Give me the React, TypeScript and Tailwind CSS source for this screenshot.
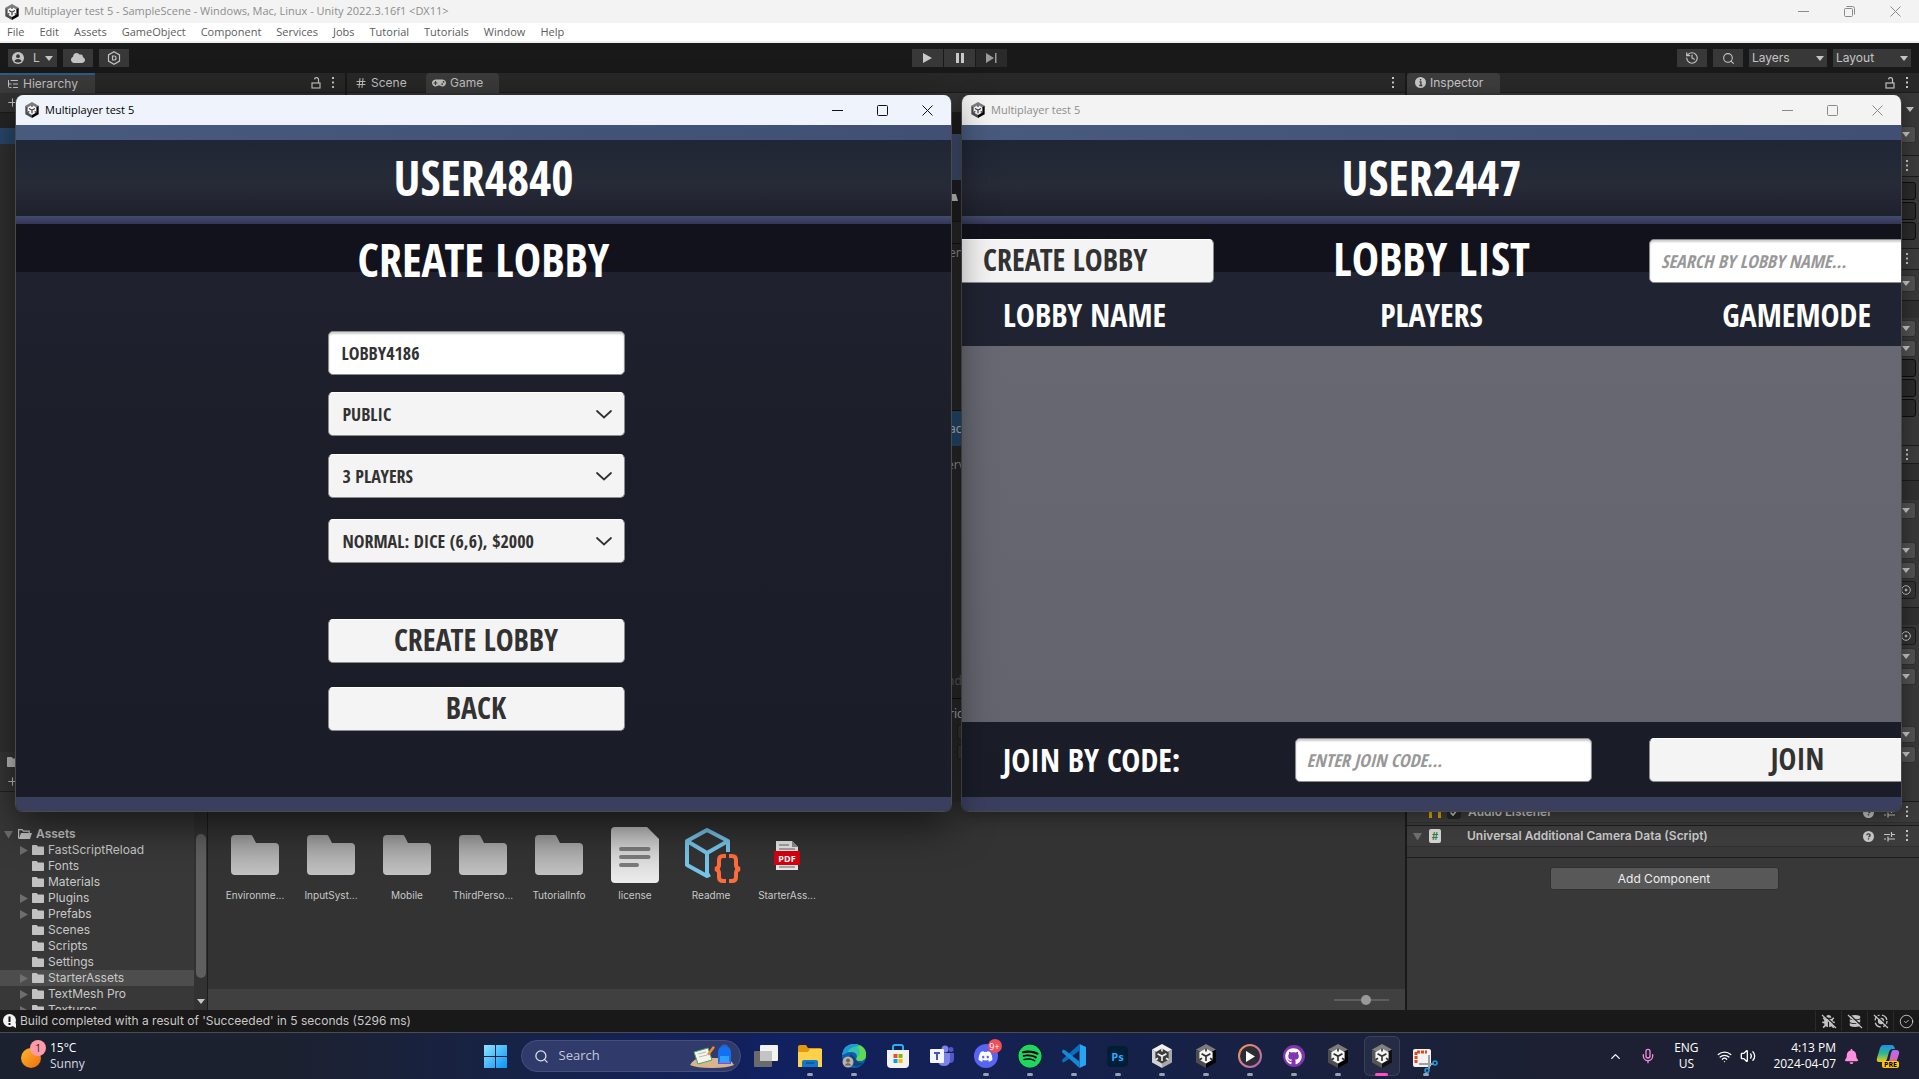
import type { ReactNode } from "react";
import {
  FaDiscord,
  FaSpotify,
  FaGithub,
  FaGamepad,
  FaCloud,
  FaBug,
  FaDatabase,
  FaBell,
} from "react-icons/fa";
import { Mic, Volume2, Wifi, ChevronUp, CircleCheck, Hash, History, Search, Plus, ListTree } from "lucide-react";

const UI = "font-['Inter','Liberation_Sans',sans-serif]";
const WIN = "font-['Open_Sans','Noto_Sans',sans-serif]";
const GAME = "font-['Open_Sans_Condensed','Roboto_Condensed','Roboto',sans-serif] font-bold";

/* ---------- small drawings ---------- */

function UnityCube({ className, light }: { className?: string; light?: boolean }) {
  return (
    <svg viewBox="0 0 24 24" className={className} aria-hidden="true">
      <path d="M12 0 22 5.6 12 11.5 2 5.6Z" fill={light ? "#f2f2f2" : "#7c7c7c"} />
      <path d="M2 5.6 12 11.5V24L2 18.4Z" fill={light ? "#d2d2d2" : "#4d4d4d"} />
      <path d="M22 5.6 12 11.5V24l10-5.6Z" fill={light ? "#a8a8a8" : "#050505"} />
      <path d="M12 4.6 18.6 8.2V15.8L12 19.6 5.4 15.8V8.2Z" fill={light ? "#3c3c3c" : "#f4f4f4"} />
      <path
        d="M12 12.2V17M12 12.2 7.6 9.7M12 12.2l4.4-2.5M12 4.6v3M5.4 15.8 8 14.2M18.6 15.8 16 14.2"
        stroke={light ? "#f0f0f0" : "#2a2a2a"}
        strokeWidth="1.6"
        fill="none"
      />
    </svg>
  );
}

function Kebab({ className = "" }: { className?: string }) {
  return (
    <svg viewBox="0 0 4 12" className={`h-3 w-1 shrink-0 ${className}`} fill="#c4c4c4" aria-hidden="true">
      <rect x="1" y="0" width="2" height="2" />
      <rect x="1" y="4.5" width="2" height="2" />
      <rect x="1" y="9" width="2" height="2" />
    </svg>
  );
}

function Lock() {
  return (
    <svg viewBox="0 0 10 12" className="h-3 w-[10px]" fill="none" stroke="#c4c4c4" strokeWidth="1.2" aria-hidden="true">
      <rect x="1" y="6" width="8" height="5" />
      <path d="M7.5 6V3a2 2 0 0 0-4-.6" />
    </svg>
  );
}

function Caret({ className = "" }: { className?: string }) {
  return (
    <svg viewBox="0 0 8 5" className={`h-[5px] w-2 shrink-0 ${className}`} fill="#c4c4c4" aria-hidden="true">
      <path d="M0 0h8L4 5Z" />
    </svg>
  );
}

function Twist({ open }: { open?: boolean }) {
  return (
    <svg viewBox="0 0 9 9" className="h-[9px] w-[9px] shrink-0" fill="#6e6e6e" aria-hidden="true">
      <path d={open ? "M0 1h9L4.500 8.500Z" : "M1 0v9L9 4.500Z"} />
    </svg>
  );
}

function SmallFolder() {
  return (
    <svg viewBox="0 0 12 10" className="h-[10px] w-3 shrink-0" fill="#c2c2c2" aria-hidden="true">
      <path d="M0 .8Q0 0 .8 0H4.600L6 1.600h5.200q.8 0 .8.8v6.800q0 .8-.8.8H.8Q0 10 0 9.200Z" />
    </svg>
  );
}

function OpenFolder() {
  return (
    <svg viewBox="0 0 14 10" className="h-[10px] w-[14px] shrink-0" aria-hidden="true">
      <path d="M.6 9.400V.6H4l1.400 1.500h5.800V4" fill="none" stroke="#c2c2c2" strokeWidth="1.200" />
      <path d="M3 4h11l-2 6H.8Z" fill="#c2c2c2" />
    </svg>
  );
}

function BigFolder() {
  return (
    <svg viewBox="0 0 48 40" className="h-10 w-12" aria-hidden="true">
      <defs>
        <linearGradient id="folder" x1="0" y1="0" x2="0" y2="1">
          <stop offset="0" stopColor="#9d9d9d" />
          <stop offset="1" stopColor="#c2c2c2" />
        </linearGradient>
      </defs>
      <path
        d="M4 0H19.500Q21 0 21.700 1.400L25 8H44q4 0 4 4V36q0 4-4 4H4q-4 0-4-4V4Q0 0 4 0Z"
        fill="url(#folder)"
      />
    </svg>
  );
}

function LicenseIcon() {
  return (
    <svg viewBox="0 0 48 56" className="h-14 w-12" aria-hidden="true">
      <defs>
        <linearGradient id="paper" x1="0" y1="0" x2="0" y2="1">
          <stop offset="0" stopColor="#c2c2c2" />
          <stop offset="1" stopColor="#ececec" />
        </linearGradient>
      </defs>
      <path d="M4 0H36L48 12V52q0 4-4 4H4q-4 0-4-4V4Q0 0 4 0Z" fill="url(#paper)" />
      <path d="M10 22H37.500M10 30H37.500M10 38H26" stroke="#7a7a7a" strokeWidth="4" strokeLinecap="round" />
    </svg>
  );
}

function ReadmeIcon() {
  return (
    <svg viewBox="0 0 56 56" className="ml-1 h-14 w-14" fill="none" aria-hidden="true">
      <path
        d="M43 25V14L22 3 2 14V38L22 49l3-1.500M2 14 22 26 43 14M22 26V49"
        stroke="#76c3ea"
        strokeWidth="4"
        strokeLinejoin="round"
      />
      <path
        d="M41 29h-3q-4 0-4 4v5q0 3.500-4 4 4 .5 4 4v4q0 4 4 4h3M44 29h3q4 0 4 4v5q0 3.500 4 4-4 .5-4 4v4q0 4-4 4h-3"
        stroke="#ff6c3c"
        strokeWidth="4"
      />
    </svg>
  );
}

function PdfIcon() {
  return (
    <svg viewBox="0 0 26 29" className="h-[29px] w-[26px]" aria-hidden="true">
      <path d="M2 0H18l6 6V29H2Z" fill="#e6e6e6" />
      <path d="M18 0l6 6h-6Z" fill="#8c8c8c" />
      <path d="M5 4H15M5 8H21M5 26H21" stroke="#8e8e8e" strokeWidth="1.500" />
      <rect x="0" y="10" width="26" height="14" fill="#d6000f" />
      <text x="13" y="20.500" textAnchor="middle" fontSize="9" fontWeight="700" fill="#fff" fontFamily="Open Sans, sans-serif">
        PDF
      </text>
    </svg>
  );
}

function CaptionButtons({ color, restore, gap }: { color: string; restore?: boolean; gap: string }) {
  return (
    <div className={`ml-auto flex items-center ${gap}`}>
      <button aria-label="Minimize" className="grid size-3 place-items-center">
        <svg viewBox="0 0 11 11" className="size-[11px]" stroke={color} fill="none">
          <path d="M0 5.500h11" />
        </svg>
      </button>
      <button aria-label="Maximize" className="grid size-3 place-items-center">
        <svg viewBox="0 0 11 11" className="size-[11px]" stroke={color} fill="none">
          {restore ? (
            <path d="M.5 3.500q0-1 1-1h6q1 0 1 1v6q0 1-1 1h-6q-1 0-1-1ZM2.500.5h6q2 0 2 2v6" />
          ) : (
            <rect x=".5" y=".5" width="10" height="10" rx="1" />
          )}
        </svg>
      </button>
      <button aria-label="Close" className="grid size-3 place-items-center">
        <svg viewBox="0 0 11 11" className="size-[11px]" stroke={color} fill="none">
          <path d="M.5.5l10 10M10.500.5l-10 10" />
        </svg>
      </button>
    </div>
  );
}

/* ---------- editor ---------- */

const menus = [
  "File", "Edit", "Assets", "GameObject", "Component", "Services",
  "Jobs", "Tutorial", "Tutorials", "Window", "Help",
];

function EditorTop() {
  const tool = "flex h-[18px] items-center bg-[#383838] text-[#c4c4c4]";
  return (
    <header>
      <div className={`flex h-[23px] items-center bg-[#f3f3f3] pl-1 pr-[18px] text-[11px] text-[#8d8d8d] ${WIN}`}>
        <UnityCube className="mr-1 size-4" />
        Multiplayer test 5 - SampleScene - Windows, Mac, Linux - Unity 2022.3.16f1 &lt;DX11&gt;
        <CaptionButtons color="#8a8a8a" restore gap="gap-[34px]" />
      </div>
      <nav className={`flex h-5 items-center gap-[15px] border-b-2 border-[#f0f0f0] bg-white pl-[7px] text-[11px] text-[#5d5d5d] ${WIN}`}>
        {menus.map((m) => (
          <button key={m}>{m}</button>
        ))}
      </nav>
      <div className={`grid h-[30px] grid-cols-[1fr_auto_1fr] items-center bg-[#191919] px-2 text-[12px] text-[#b4b4b4] ${UI}`}>
        <div className="flex gap-[6px]">
          <button className={`${tool} w-[49px] justify-between px-1`}>
            <svg viewBox="0 0 12 12" className="size-3" aria-hidden="true">
              <circle cx="6" cy="6" r="6" fill="#c4c4c4" />
              <circle cx="6" cy="4.200" r="1.900" fill="#383838" />
              <path d="M2.500 9.500Q2.500 7 6 7t3.500 2.500Q6 11.500 2.500 9.500Z" fill="#383838" />
            </svg>
            <span className="pl-1">L</span>
            <Caret />
          </button>
          <button aria-label="Cloud" className={`${tool} w-[30px] justify-center`}>
            <FaCloud size={14} />
          </button>
          <button aria-label="Fast Script Reload" className={`${tool} w-[30px] justify-center`}>
            <svg viewBox="0 0 14 14" className="size-[14px]" fill="none" stroke="#c4c4c4" strokeWidth="1.200" aria-hidden="true">
              <path d="M7 .8 12.500 3.900V10.100L7 13.200 1.500 10.100V3.900Z" />
              <path d="M5.500 5H7.200Q9 5 9 7T7.200 9H5.500Z" />
            </svg>
          </button>
        </div>
        <div className="flex gap-px">
          <button aria-label="Play" className={`${tool} w-[31px] justify-center`}>
            <svg viewBox="0 0 9 10" className="h-[10px] w-[9px]" fill="#c9c9c9"><path d="M0 0l9 5-9 5Z" /></svg>
          </button>
          <button aria-label="Pause" className={`${tool} w-[31px] justify-center`}>
            <svg viewBox="0 0 8 10" className="h-[10px] w-2" fill="#c9c9c9"><path d="M0 0h3v10H0ZM5 0h3v10H5Z" /></svg>
          </button>
          <button aria-label="Step" className="flex h-[18px] w-[31px] items-center justify-center bg-[#2a2a2a]">
            <svg viewBox="0 0 11 10" className="h-[10px] w-[11px]" fill="#9a9a9a"><path d="M0 0l8 5-8 5ZM9 0h1.500v10H9Z" /></svg>
          </button>
        </div>
        <div className="flex justify-end gap-[6px]">
          <button aria-label="Undo history" className={`${tool} w-[30px] justify-center`}><History size={14} /></button>
          <button aria-label="Search" className={`${tool} w-[30px] justify-center`}><Search size={13} /></button>
          <button className={`${tool} w-[78px] justify-between px-[3px]`}>Layers<Caret /></button>
          <button className={`${tool} w-[78px] justify-between px-[3px]`}>Layout<Caret /></button>
        </div>
      </div>
    </header>
  );
}

function TabBar({ children, lock }: { children: ReactNode; lock?: boolean }) {
  return (
    <div className="flex h-5 shrink-0 items-center border-b border-[#1c1c1c] bg-[#282828] pr-[10px] text-[12px] text-[#c4c4c4]">
      {children}
      <div className="ml-auto flex items-center gap-[10px]">
        {lock && <Lock />}
        <Kebab />
      </div>
    </div>
  );
}

function Hierarchy() {
  return (
    <section className="flex w-[345px] flex-col bg-[#323232]">
      <TabBar lock>
        <button className="flex h-5 w-[95px] items-center gap-1 border-t-2 border-[#2c5d87] bg-[#3c3c3c] pl-[7px]">
          <ListTree size={12} /> Hierarchy
        </button>
      </TabBar>
      <button aria-label="Add" className="flex h-[19px] items-center pl-[6px] text-[#c4c4c4]">
        <Plus size={13} />
      </button>
      <div className="h-4 border-t border-[#1c1c1c] bg-[#262626]" />
      <div className="h-4 bg-[#2c4a70]" />
    </section>
  );
}

function GamePanel() {
  return (
    <section className="flex flex-1 flex-col bg-[#363636]">
      <TabBar>
        <button className="flex h-5 w-[79px] items-center gap-1 pl-2">
          <Hash size={12} /> Scene
        </button>
        <button className="flex h-5 w-[73px] items-center gap-1 rounded-t-sm bg-[#3c3c3c] pl-[6px]">
          <FaGamepad size={14} /> Game
        </button>
      </TabBar>
    </section>
  );
}

const tree: { name: string; arrow?: boolean; selected?: boolean }[] = [
  { name: "FastScriptReload", arrow: true },
  { name: "Fonts" },
  { name: "Materials" },
  { name: "Plugins", arrow: true },
  { name: "Prefabs", arrow: true },
  { name: "Scenes" },
  { name: "Scripts" },
  { name: "Settings" },
  { name: "StarterAssets", arrow: true, selected: true },
  { name: "TextMesh Pro", arrow: true },
  { name: "Textures", arrow: true },
];

const assets: { name: string; icon: ReactNode }[] = [
  { name: "Environme...", icon: <BigFolder /> },
  { name: "InputSyst...", icon: <BigFolder /> },
  { name: "Mobile", icon: <BigFolder /> },
  { name: "ThirdPerso...", icon: <BigFolder /> },
  { name: "TutorialInfo", icon: <BigFolder /> },
  { name: "license", icon: <LicenseIcon /> },
  { name: "Readme", icon: <ReadmeIcon /> },
  { name: "StarterAss...", icon: <PdfIcon /> },
];

function Project() {
  return (
    <section className="flex h-[258px] shrink-0 flex-col bg-[#383838] text-[12px] text-[#c8c8c8]">
      <div className="flex h-5 items-center pl-[7px]"><SmallFolder /></div>
      <div className="flex h-5 items-center border-b border-[#232323] pl-[6px]"><Plus size={13} /></div>
      <div className="flex min-h-0 flex-1">
        <div className="w-[194px] overflow-hidden pt-[34px]">
          <div className="flex h-4 items-center gap-1 pl-1 font-semibold leading-4">
            <Twist open />
            <span className="flex items-center gap-1 pl-px"><OpenFolder /> Assets</span>
          </div>
          {tree.map((t) => (
            <div key={t.name} className={`flex h-4 items-center gap-1 pl-[19px] leading-4 ${t.selected ? "bg-[#4d4d4d]" : ""}`}>
              <span className="flex w-[9px]">{t.arrow && <Twist />}</span>
              <SmallFolder />
              <span>{t.name}</span>
            </div>
          ))}
        </div>
        <div className="flex w-[14px] flex-col items-center border-r border-[#1c1c1c] bg-[#323232] pt-[42px]">
          <div className="h-36 w-[10px] rounded-full bg-[#5f5f5f]" />
          <Caret className="mt-auto mb-[6px]" />
        </div>
        <div className="flex flex-1 flex-col bg-[#333333]">
          <div className="flex flex-1 pl-[9px] pt-[34px]">
            {assets.map((a) => (
              <figure key={a.name} className="flex w-[76px] flex-col items-center">
                <div className="grid h-[58px] place-items-center">{a.icon}</div>
                <figcaption className="mt-[3px] text-[10px] leading-4">{a.name}</figcaption>
              </figure>
            ))}
          </div>
          <div className="flex h-[21px] items-center justify-end bg-[#404040] pr-4">
            <input
              type="range"
              aria-label="Icon size"
              defaultValue={60}
              className="h-[2px] w-[55px] appearance-none bg-[#5e5e5e] [&::-webkit-slider-thumb]:size-[10px] [&::-webkit-slider-thumb]:appearance-none [&::-webkit-slider-thumb]:rounded-full [&::-webkit-slider-thumb]:bg-[#999999]"
            />
          </div>
        </div>
      </div>
    </section>
  );
}

/* ---------- inspector ---------- */

function Drop({ className = "" }: { className?: string }) {
  return (
    <div className={`mr-[3px] flex h-[17px] items-center justify-end rounded-[3px] border border-[#303030] bg-[#515151] pr-[5px] ${className}`}>
      <Caret />
    </div>
  );
}
function Field({ className = "" }: { className?: string }) {
  return <div className={`mr-[3px] h-[18px] rounded-[3px] border border-[#0d0d0d] bg-[#2a2a2a] ${className}`} />;
}
function ObjectField({ className = "" }: { className?: string }) {
  return (
    <div className={`mr-[3px] flex h-[18px] items-center justify-end rounded-[3px] border border-[#1c1c1c] bg-[#323232] pr-1 ${className}`}>
      <svg viewBox="0 0 10 10" className="size-[10px]" fill="none" stroke="#c4c4c4">
        <circle cx="5" cy="5" r="4.300" />
        <circle cx="5" cy="5" r="1" fill="#c4c4c4" />
      </svg>
    </div>
  );
}
function KebabRow({ className = "" }: { className?: string }) {
  return (
    <div className={`flex items-center justify-end border-y border-[#1c1c1c] bg-[#3c3c3c] pr-[10px] ${className}`}>
      <Kebab />
    </div>
  );
}
function RowTools() {
  return (
    <div className="ml-auto flex items-center gap-[10px]">
      <svg viewBox="0 0 11 11" className="size-[11px]" aria-hidden="true">
        <circle cx="5.500" cy="5.500" r="5.500" fill="#c4c4c4" />
        <path d="M3.800 4.300Q3.900 2.800 5.500 2.800t1.700 1.400q0 .8-1.700 1.900M5.500 7.300v1.300" stroke="#383838" strokeWidth="1.300" fill="none" />
      </svg>
      <svg viewBox="0 0 11 11" className="size-[11px]" stroke="#c4c4c4" strokeWidth="1.200" aria-hidden="true">
        <path d="M0 3.500h6M8 3.500h3M7.500 1v5M0 8h2M4.500 8H11M4 5.500v5" />
      </svg>
      <Kebab />
    </div>
  );
}

function Inspector() {
  return (
    <aside className="flex w-[514px] shrink-0 flex-col border-l-2 border-[#191919] bg-[#383838] text-[12px] text-[#c4c4c4]">
      <TabBar lock>
        <button className="flex h-5 w-[93px] items-center gap-1 rounded-t-sm bg-[#3c3c3c] pl-2">
          <svg viewBox="0 0 11 11" className="size-[11px]" aria-hidden="true">
            <circle cx="5.500" cy="5.500" r="5.500" fill="#c4c4c4" />
            <path d="M4.500 4.800h1.400V8.500M4.300 8.500h3M5.500 2v1.500" stroke="#3c3c3c" strokeWidth="1.300" fill="none" />
          </svg>
          Inspector
        </button>
      </TabBar>
      <div className="flex h-[33px] items-center justify-end pr-[5px]"><Caret /></div>
      <Drop />
      <KebabRow className="mt-3 h-[22px]" />
      <Field className="mt-[5px]" />
      <Field className="mt-0.5" />
      <Field className="mt-0.5" />
      <KebabRow className="mt-2 h-[22px]" />
      <Drop className="mt-[5px]" />
      <div className="mt-2 h-[18px] border-t border-[#1c1c1c] bg-[#303030]" />
      <Drop className="mt-0.5" />
      <Drop className="mt-[3px]" />
      <Field className="mt-0.5" />
      <Field className="mt-0.5" />
      <Field className="mt-0.5" />
      <KebabRow className="mt-7 h-[19px]" />
      <div className="h-9 bg-[#303030]"><div className="h-[17px] border-b border-[#1c1c1c]" /></div>
      <Drop className="mt-0.5" />
      <Drop className="mt-[23px]" />
      <Drop className="mt-[3px]" />
      <ObjectField className="mt-0.5" />
      <div className="mt-2 h-[18px] border-t border-[#1c1c1c] bg-[#303030]" />
      <ObjectField className="mt-0.5" />
      <Drop className="mt-[3px]" />
      <Drop className="mt-[3px]" />
      <Drop className="mt-[41px]" />
      <Drop className="mt-[3px]" />
      <div className="mt-auto flex h-[21px] items-center border-t border-[#1c1c1c] bg-[#3c3c3c] pl-[22px] pr-[10px] font-semibold">
        <span className="h-3 w-3 border-x-[3px] border-[#d9a300]" />
        <label className="flex items-center gap-[7px] pl-[6px]">
          <span className="grid">
            <input type="checkbox" defaultChecked className="col-start-1 row-start-1 size-[14px] appearance-none rounded-[3px] bg-[#262626]" />
            <svg viewBox="0 0 14 14" className="col-start-1 row-start-1 size-[14px]" fill="none" stroke="#c4c4c4" strokeWidth="1.600" aria-hidden="true">
              <path d="M3.500 7.500 6 10l5-6" />
            </svg>
          </span>
          Audio Listener
        </label>
        <RowTools />
      </div>
      <div className="h-1 border-b border-t border-[#1c1c1c] border-t-[#303030]" />
      <div className="flex h-[21px] items-center border-b border-[#303030] bg-[#3c3c3c] pl-[6px] pr-[10px] font-semibold">
        <Twist open />
        <span className="ml-[7px] grid h-[14px] w-3 place-items-center rounded-[2px] bg-[#d2d2d2] text-[10px] text-[#2c7a3a]">#</span>
        <span className="ml-[26px]">Universal Additional Camera Data (Script)</span>
        <RowTools />
      </div>
      <div className="h-[11px] border-b border-[#1c1c1c]" />
      <div className="flex h-[152px] justify-center pl-0.5 pt-[9px]">
        <button className="h-[23px] w-[229px] rounded-[3px] border border-[#303030] bg-[#585858] text-[#eeeeee]">Add Component</button>
      </div>
    </aside>
  );
}

function StatusBar() {
  const cell = "relative grid h-5 w-[26px] place-items-center border-l border-[#2a2a2a] text-[#c4c4c4]";
  const slash = (
    <svg viewBox="0 0 16 16" className="absolute size-4" strokeWidth="1.200">
      <path d="M2 1l14 13" stroke="#191919" />
      <path d="M1 2l14 13" stroke="#c4c4c4" />
    </svg>
  );
  return (
    <footer className={`flex h-[22px] shrink-0 items-center bg-[#191919] pl-[3px] text-[12px] text-[#c8c8c8] ${UI}`}>
      <svg viewBox="0 0 13 14" className="mr-1 h-[14px] w-[13px]" aria-hidden="true">
        <circle cx="6.500" cy="6.500" r="6.500" fill="#f2f2f2" />
        <path d="M8 11l5-2v5Z" fill="#f2f2f2" />
        <path d="M6.500 2.500V8M6.500 9v2" stroke="#111" strokeWidth="2" />
      </svg>
      Build completed with a result of 'Succeeded' in 5 seconds (5296 ms)
      <div className="ml-auto flex">
        <span className={cell}><FaBug size={13} />{slash}</span>
        <span className={cell}><FaDatabase size={12} />{slash}</span>
        <span className={cell}>
          <svg viewBox="0 0 14 14" className="size-[14px]" fill="none" stroke="#c4c4c4" strokeWidth="1.300">
            <circle cx="7" cy="7" r="6" strokeDasharray="7 2.500" />
            <circle cx="7" cy="7" r="2.500" fill="#c4c4c4" />
          </svg>
          {slash}
        </span>
        <span className={cell}><CircleCheck size={15} strokeWidth={1.500} /></span>
      </div>
    </footer>
  );
}

/* ---------- game windows ---------- */

const control = "h-11 w-[297px] shrink-0 rounded-[5px] border border-[#8b8b8b] border-t-white bg-[#f4f4f4] text-[#323232]";
const action = `${control} pb-[3px] text-[30px] leading-10 uppercase`;
const textBox = "h-11 w-[297px] shrink-0 rounded-[5px] border border-[#8b8b8b] bg-white text-[18px] shadow-[inset_0_2px_2px_#cfcfcf]";

function GameWindow({ user, active, className, children }: { user: string; active?: boolean; className: string; children: ReactNode }) {
  return (
    <section
      className={`absolute top-[95px] flex h-[717px] flex-col overflow-hidden rounded-lg border border-t-0 border-[#4a4a4e] ${active ? "shadow-[0_12px_40px_rgba(0,0,0,0.6)]" : "shadow-[0_4px_18px_rgba(0,0,0,0.4)]"} ${className}`}
    >
      <div
        className={`flex h-[30px] shrink-0 items-center pl-2 pr-[18px] text-[11px] ${WIN} ${active ? "bg-[#eff3fb] text-black" : "bg-[#f3f3f3] text-[#8d8d8d]"}`}
      >
        <UnityCube className="mr-[5px] size-4" />
        Multiplayer test 5
        <CaptionButtons color={active ? "#111111" : "#8a8a8a"} gap="gap-[33px]" />
      </div>
      <div className={`flex min-h-0 flex-1 flex-col bg-linear-to-b from-[#222632] via-[#1c1e2a] via-45% to-[#1a1c28] uppercase text-white ${GAME}`}>
        <div className="h-[15px] shrink-0 bg-linear-to-r from-[#485a7d] to-[#414f75]" />
        <div className="flex h-[76px] shrink-0 items-center justify-center bg-linear-to-b from-[#1f2635] via-[#272b37] via-60% to-[#1e202c] text-[48px]">
          <h1>{user}</h1>
        </div>
        <div className="h-2 shrink-0 bg-linear-to-b from-[#434c6c] to-[#353558]" />
        {children}
        <div className="h-[14px] shrink-0 bg-[#3b3f5e]" />
      </div>
    </section>
  );
}

function LobbySelect({ label, value, className = "" }: { label: string; value: string; className?: string }) {
  return (
    <div className={`relative ${className}`}>
      <select aria-label={label} defaultValue={value} className={`${control} appearance-none pl-[14px] text-[18px] uppercase`}>
        <option>{value}</option>
      </select>
      <svg viewBox="0 0 16 9" className="pointer-events-none absolute right-[13px] top-[18px] h-[9px] w-4" fill="none" stroke="#323232" strokeWidth="1.800" aria-hidden="true">
        <path d="M1 1l7 6.500L15 1" strokeLinecap="round" />
      </svg>
    </div>
  );
}

function CreateLobby() {
  return (
    <>
      <div className="h-12 shrink-0 bg-[#12121c]">
        <h2 className="pt-[3px] text-center text-[46px] leading-[64px]">Create Lobby</h2>
      </div>
      <form className="flex flex-1 flex-col items-center pr-[15px] pt-[59px]">
        <input aria-label="Lobby name" defaultValue="LOBBY4186" className={`${textBox} px-[13px] text-[#323232]`} />
        <LobbySelect label="Visibility" value="Public" className="mt-[17px]" />
        <LobbySelect label="Players" value="3 Players" className="mt-[18px]" />
        <LobbySelect label="Game mode" value="Normal: Dice (6,6), $2000" className="mt-[21px]" />
        <button type="button" className={`${action} mt-14`}>Create Lobby</button>
        <button type="button" className={`${action} mt-6`}>Back</button>
      </form>
    </>
  );
}

function LobbyList() {
  return (
    <>
      <div className="h-[122px] shrink-0 bg-linear-to-b from-[#12121c] from-[48px] to-[#202432] to-[48px]">
        <div className="grid h-[73px] grid-cols-[1fr_auto_1fr] items-center">
          <button className={`${action} -ml-[45px] pl-[65px] text-left`}>Create Lobby</button>
          <h2 className="pb-[6px] text-[46px] leading-[64px]">Lobby List</h2>
          <div className="flex justify-end overflow-hidden">
            <input
              aria-label="Search by lobby name"
              placeholder="SEARCH BY LOBBY NAME..."
              className={`${textBox} -mr-[45px] px-[11px] italic placeholder:text-[#989898]`}
            />
          </div>
        </div>
        <div className="grid grid-cols-3 items-center text-[32px] leading-9">
          <span className="pl-[41px]">Lobby Name</span>
          <span className="text-center">Players</span>
          <span className="pr-[30px] text-right">Gamemode</span>
        </div>
      </div>
      <div className="flex-1 bg-linear-to-b from-[#686873] to-[#64646e]" />
      <form className="flex h-[75px] shrink-0 items-center justify-between pt-px">
        <label htmlFor="code" className="w-[275px] pl-[41px] text-[32px]">Join by code:</label>
        <input id="code" placeholder="ENTER JOIN CODE..." className={`${textBox} px-[11px] italic placeholder:text-[#989898]`} />
        <div className="flex w-[252px] overflow-hidden">
          <button type="button" className={action}>Join</button>
        </div>
      </form>
    </>
  );
}

/* The build settings window shows only as a strip between the two game windows. */
function BuildSettings() {
  return (
    <div className="absolute left-[951px] top-[112px] flex h-[690px] w-3 flex-col overflow-hidden bg-[#2e2e2e] text-[12px] leading-4 text-[#a8a8a8]">
      <div className="h-[22px] shrink-0 bg-[#202020]" />
      <div className="h-[46px] shrink-0 bg-[#4a5a80]" />
      <div className="flex h-[21px] shrink-0 items-end bg-[#23232c] text-white">
        <svg viewBox="0 0 11 7" className="h-[7px] w-[11px]" fill="#e4e4e4" aria-hidden="true">
          <path d="M0 0h5l2 7H0ZM10 0h1v7h-1Z" />
        </svg>
      </div>
      <div className="h-[21px] shrink-0 border-b border-[#1c1c1c] bg-[#242424]" />
      <div className="h-[22px] shrink-0 border-b border-[#151515]" />
      <span className="-ml-0.5 mt-px">en</span>
      <div className="mt-[149px] flex h-9 shrink-0 items-center border-t border-[#151515] bg-[#2a567e] text-[#d8d8d8]"><span className="-ml-0.5">ac</span></div>
      <span className="-ml-1 mt-[11px]">erv</span>
      <span className="-ml-1 mt-[200px] text-[#666666]">nd</span>
      <div className="mt-[9px] border-t border-[#101010] pt-[7px] text-[#c4c4c4]"><span className="-ml-0.5">ric</span></div>
      <div className="ml-[6px] mt-[2px] h-4 shrink-0 rounded-sm border border-[#202020] bg-[#3a3a3a]" />
      <div className="ml-[6px] mt-1 h-4 shrink-0 rounded-sm border border-[#202020] bg-[#3a3a3a]" />
    </div>
  );
}

/* ---------- taskbar ---------- */

function TaskItem({ children, running, active, label }: { children: ReactNode; running?: boolean; active?: boolean; label: string }) {
  return (
    <button aria-label={label} className="relative flex h-10 w-11 flex-col items-center justify-center">
      {active && <span className="absolute inset-y-0 left-1 w-9 rounded-md border border-white/10 bg-white/5" />}
      {children}
      {running && <span className="absolute bottom-0 h-[3px] w-[6px] rounded-full bg-[#9aa0b4]" />}
      {active && <span className="absolute bottom-0 h-[3px] w-[13px] rounded-full bg-[#ff4fc3]" />}
    </button>
  );
}

function Taskbar() {
  return (
    <footer
      className={`grid h-[47px] shrink-0 grid-cols-[1fr_auto_1fr] items-center border-t border-[#4b4c52] bg-linear-to-r from-[#1c2130] from-15% via-[#112060] via-40% to-[#1c2032] to-80% text-[12px] text-white ${WIN}`}
    >
      <div className="flex items-center gap-[9px] pl-[21px]">
        <span className="relative mt-1 size-5 rounded-full bg-linear-to-br from-[#f7b72c] to-[#f06a10]">
          <span className="absolute -top-2 left-[9px] grid size-4 place-items-center rounded-full bg-[#ff9aa8] text-[10px] leading-none text-[#222]">1</span>
        </span>
        <p className="leading-4">15°C<br /><span className="text-[#d8dae0]">Sunny</span></p>
      </div>
      <div className="flex items-center pl-0.5">
        <TaskItem label="Start">
          <svg viewBox="0 0 23 23" className="size-[23px]">
            <defs>
              <linearGradient id="win" x1="0" y1="0" x2="1" y2="1">
                <stop offset="0" stopColor="#8ce5ff" />
                <stop offset="1" stopColor="#0a93f5" />
              </linearGradient>
            </defs>
            <path d="M0 0h11v11H0ZM12 0h11v11H12ZM0 12h11v11H0ZM12 12h11v11H12Z" fill="url(#win)" />
          </svg>
        </TaskItem>
        <label className="mx-[3px] flex h-8 w-[220px] items-center gap-[10px] rounded-full border border-[#46507c] bg-[#303b6c] pl-3 pr-[6px]">
          <Search size={15} color="#dfe2ee" />
          <input aria-label="Search" placeholder="Search" className="w-0 flex-1 text-[13px] placeholder:text-[#c4c9da]" />
          <svg viewBox="0 0 44 24" className="h-6 w-11" aria-hidden="true">
            <path d="M0 21q4-7 12-7h20q9 1 12 7-6 3-22 3T0 21Z" fill="#d9b58c" />
            <path d="M4 8l14-4 4 12-14 4Z" fill="#f6f4ea" stroke="#4aa36a" />
            <path d="M8 10l8-2M9 13l8-2" stroke="#b8b8b8" />
            <path d="M17 10l6-8 2 1.500-6 8Z" fill="#f28a2e" />
            <path d="M28 20V9q0-7 6.500-7T41 9V20Z" fill="#1470f0" />
            <path d="M31 3q3.500-4 7 0" fill="none" stroke="#3b5bc0" strokeWidth="1.500" />
            <path d="M30 12h9v6h-9Z" fill="#29a3ff" />
            <path d="M29 18.500h11" stroke="#b05cf0" strokeWidth="1.500" />
          </svg>
        </label>
        <TaskItem label="Task view">
          <svg viewBox="0 0 24 22" className="h-[22px] w-6">
            <rect x="6" width="18" height="16" rx="1" fill="#f3f3f3" />
            <rect y="6" width="18" height="16" rx="1" fill="#6b6b6b" />
            <rect x="6" y="6" width="12" height="10" fill="#c4c4c4" />
          </svg>
        </TaskItem>
        <TaskItem label="File Explorer" running>
          <svg viewBox="0 0 24 22" className="h-[22px] w-6">
            <path d="M0 2Q0 0 2 0h6l2 3h12q2 0 2 2v6H0Z" fill="#e09a10" />
            <path d="M0 7l10 0 2-3h12v18H0Z" fill="#ffd04a" />
            <path d="M4 22v-5q0-2 2-2h12q2 0 2 2v5Z" fill="#0f78c8" />
            <path d="M8 18h8" stroke="#0a4f92" strokeWidth="1.500" />
          </svg>
        </TaskItem>
        <TaskItem label="Edge" running>
          <svg viewBox="0 0 24 24" className="size-6">
            <circle cx="12" cy="12" r="12" fill="#0c5fa8" />
            <path d="M0 11Q2 0 12 0q12 1 12 11 0 6-7 6-4-1-2-4 0-5-6-5-7 0-9 3Z" fill="#35c1b1" />
            <path d="M12 0q12 1 12 11 0 6-7 6-4-1-2-4Q22 8 12 0Z" fill="#5fd94f" />
            <path d="M0 11Q2 0 12 0q4 0 6 2-10 0-13 7Z" fill="#1c9ad8" />
            <path d="M9 10q-5 8 4 12 5 1 9-3-8 1-9-5Z" fill="#123f7d" />
            <circle cx="6" cy="18" r="5.500" fill="#b9b2a8" />
            <circle cx="6" cy="16.500" r="2" fill="#6b655e" />
            <path d="M2.500 21.500q3.500-5 7 0" fill="#6b655e" />
          </svg>
        </TaskItem>
        <TaskItem label="Microsoft Store">
          <svg viewBox="0 0 24 24" className="size-6">
            <path d="M7 7V3q0-2 2-2h6q2 0 2 2v4" fill="none" stroke="#29b0ee" strokeWidth="2" />
            <path d="M1 6h22v14q0 4-4 4H5q-4 0-4-4Z" fill="#f2f2f2" />
            <path d="M7.500 10h4v4h-4Z" fill="#f04e26" />
            <path d="M12.500 10h4v4h-4Z" fill="#7fba00" />
            <path d="M7.500 15h4v4h-4Z" fill="#00a3ee" />
            <path d="M12.500 15h4v4h-4Z" fill="#ffb902" />
          </svg>
        </TaskItem>
        <TaskItem label="Teams">
          <svg viewBox="0 0 24 22" className="h-[22px] w-6">
            <circle cx="15" cy="4" r="3.500" fill="#7b83eb" />
            <circle cx="21" cy="4.500" r="2.500" fill="#5059c9" />
            <path d="M17 8h7v6q0 4-4 4h-3Z" fill="#5059c9" />
            <path d="M8 8h12v7q0 6-6 6t-6-6Z" fill="#7b83eb" />
            <rect y="4" width="14" height="14" rx="1" fill="#f5f5ff" />
            <path d="M4 8h6M7 8v7" stroke="#4b53bc" strokeWidth="2" />
          </svg>
        </TaskItem>
        <TaskItem label="Discord" running>
          <span className="grid size-6 place-items-center rounded-full bg-[#5865f2]"><FaDiscord size={15} /></span>
          <span className="absolute right-[6px] top-[3px] grid h-[14px] w-[14px] place-items-center rounded-full bg-[#ee4e55] text-[9px] leading-none">9+</span>
        </TaskItem>
        <TaskItem label="Spotify" running>
          <span className="rounded-full bg-black"><FaSpotify size={24} color="#1ed760" /></span>
        </TaskItem>
        <TaskItem label="Visual Studio Code" running>
          <svg viewBox="0 0 24 24" className="size-6">
            <path d="M17.500 0 24 3v18l-6.500 3Z" fill="#2aa4f0" />
            <path d="M17.500 0v6.500L3.500 17.600 1 18.500 0 17l.3-1.500Z" fill="#0a6ebd" />
            <path d="M17.500 24v-6.500L3.500 6.400 1 5.500 0 7l.3 1.500Z" fill="#1688d4" />
          </svg>
        </TaskItem>
        <TaskItem label="Photoshop" running>
          <span className="grid h-[21px] w-[21px] place-items-center rounded bg-[#001e36] text-[11px] font-bold leading-none text-[#31a8ff]">Ps</span>
        </TaskItem>
        <TaskItem label="Unity Hub" running><UnityCube light className="size-6" /></TaskItem>
        <TaskItem label="Unity Editor" running><UnityCube className="size-6" /></TaskItem>
        <TaskItem label="Media Player" running>
          <span className="grid size-6 place-items-center rounded-full bg-linear-to-br from-[#f59a3c] to-[#b05cc0]">
            <span className="grid size-5 place-items-center rounded-full bg-[#2c2c34]">
              <svg viewBox="0 0 9 11" className="ml-[2px] h-[11px] w-[9px]" fill="#fff"><path d="M0 0l9 5.500L0 11Z" /></svg>
            </span>
          </span>
        </TaskItem>
        <TaskItem label="GitHub Desktop" running>
          <span className="grid size-[22px] place-items-center rounded-full bg-[#8534b0]"><FaGithub size={17} /></span>
        </TaskItem>
        <TaskItem label="Multiplayer test 5" running><UnityCube className="size-6" /></TaskItem>
        <TaskItem label="Multiplayer test 5 (active)" active><UnityCube className="size-6" /></TaskItem>
        <TaskItem label="Snipping Tool" running>
          <svg viewBox="0 0 25 24" className="mt-[9px] h-6 w-[25px]">
            <rect width="18" height="18" rx="2" fill="#f3f3f3" />
            <path d="M3 14V3h11" fill="none" stroke="#e0481c" strokeWidth="3" strokeDasharray="3 1" />
            <path d="M16 6v14M6 15h15" stroke="#9aa2a8" strokeWidth="2" />
            <circle cx="22" cy="14" r="2" fill="none" stroke="#1e9be0" strokeWidth="1.600" />
            <circle cx="14" cy="21.500" r="2" fill="none" stroke="#1e9be0" strokeWidth="1.600" />
          </svg>
        </TaskItem>
      </div>
      <div className="flex items-center justify-end pr-[19px]">
        <ChevronUp size={15} />
        <Mic size={16} color="#f08be0" className="ml-[17px]" />
        <p className="ml-[10px] w-10 text-center leading-4">ENG<br />US</p>
        <Wifi size={15} className="ml-[11px]" />
        <Volume2 size={16} className="ml-2" />
        <p className="ml-[17px] text-right leading-4">4:13 PM<br />2024-04-07</p>
        <FaBell size={15} color="#ff8fe0" className="ml-2" />
        <span className="relative ml-[17px] block h-6 w-6">
          <svg viewBox="0 0 24 24" className="size-6" aria-hidden="true">
            <defs>
              <linearGradient id="cpA" x1="0" y1="0" x2="0" y2="1">
                <stop offset="0" stopColor="#1f8df0" />
                <stop offset=".5" stopColor="#2fb98c" />
                <stop offset="1" stopColor="#f3c81c" />
              </linearGradient>
              <linearGradient id="cpB" x1="0" y1="0" x2="0" y2="1">
                <stop offset="0" stopColor="#b06cf0" />
                <stop offset="1" stopColor="#f0609c" />
              </linearGradient>
            </defs>
            <path d="M7 1h9q2 0 3 4h-3q-2 0-3 3l-2 7q-1 3-4 3H3q-3 0-2-4L4 4q1-3 3-3Z" fill="url(#cpA)" />
            <path d="M17 6h3q4 0 3 4l-3 9q-1 3-4 3H9q3 0 4-4l2-9q1-3 2-3Z" fill="url(#cpB)" />
          </svg>
          <span className="absolute bottom-0 left-[6px] rounded-[2px] bg-[#ffc800] px-[2px] text-[7px] font-bold leading-[7px] text-black">PRE</span>
        </span>
      </div>
    </footer>
  );
}

export default function App() {
  return (
    <div className="relative flex h-screen w-full flex-col overflow-hidden bg-[#191919]">
      <EditorTop />
      <main className={`flex min-h-0 flex-1 ${UI}`}>
        <div className="flex min-w-0 flex-1 flex-col">
          <div className="flex min-h-0 flex-1 gap-0.5">
            <Hierarchy />
            <GamePanel />
          </div>
          <Project />
        </div>
        <Inspector />
      </main>
      <StatusBar />
      <Taskbar />
      <BuildSettings />
      <GameWindow user="User2447" className="left-[961px] w-[941px]">
        <LobbyList />
      </GameWindow>
      <GameWindow user="User4840" active className="left-[15px] w-[937px]">
        <CreateLobby />
      </GameWindow>
    </div>
  );
}
